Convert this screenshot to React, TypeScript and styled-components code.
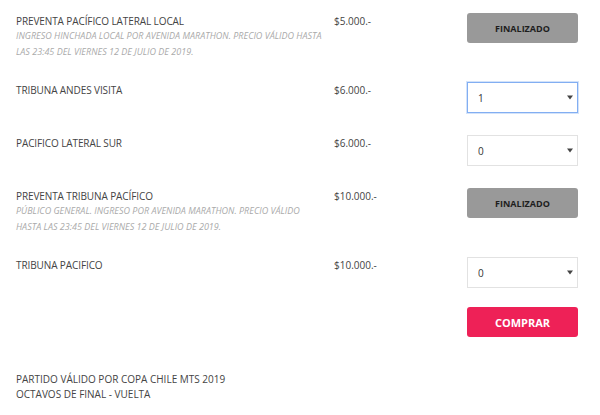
import React from "react";
import styled, { createGlobalStyle } from "styled-components";

type Ticket = {
  name: string;
  description?: string;
  price: string;
  finished?: boolean;
  quantity?: number;
  focused?: boolean;
};

const tickets: Ticket[] = [
  {
    name: "PREVENTA PACÍFICO LATERAL LOCAL",
    description:
      "INGRESO HINCHADA LOCAL POR AVENIDA MARATHON. PRECIO VÁLIDO HASTA LAS 23:45 DEL VIERNES 12 DE JULIO DE 2019.",
    price: "$5.000.-",
    finished: true,
  },
  { name: "TRIBUNA ANDES VISITA", price: "$6.000.-", quantity: 1, focused: true },
  { name: "PACIFICO LATERAL SUR", price: "$6.000.-", quantity: 0 },
  {
    name: "PREVENTA TRIBUNA PACÍFICO",
    description:
      "PÚBLICO GENERAL. INGRESO POR AVENIDA MARATHON. PRECIO VÁLIDO HASTA LAS 23:45 DEL VIERNES 12 DE JULIO DE 2019.",
    price: "$10.000.-",
    finished: true,
  },
  { name: "TRIBUNA PACIFICO", price: "$10.000.-", quantity: 0 },
];

const App = () => {
  return (
    <>
      <GlobalStyle />
      <Page>
        {tickets.map((t) => (
          <TicketRow key={t.name}>
            <Info>
              <Name>{t.name}</Name>
              {t.description && <Description>{t.description}</Description>}
            </Info>
            <Price>{t.price}</Price>
            {t.finished ? (
              <FinishedButton type="button">FINALIZADO</FinishedButton>
            ) : (
              <SelectWrap>
                <QuantitySelect focused={!!t.focused} defaultValue={t.quantity}>
                  {[0, 1, 2, 3, 4].map((n) => (
                    <option key={n} value={n}>
                      {n}
                    </option>
                  ))}
                </QuantitySelect>
                <Arrow width="6" height="5" viewBox="0 0 6 5">
                  <path d="M0 0.5 H6 L3 4.5 Z" fill="#444" />
                </Arrow>
              </SelectWrap>
            )}
          </TicketRow>
        ))}
        <Actions>
          <BuyButton type="button">COMPRAR</BuyButton>
        </Actions>
        <Footer>
          PARTIDO VÁLIDO POR COPA CHILE MTS 2019
          <br />
          OCTAVOS DE FINAL - VUELTA
        </Footer>
      </Page>
    </>
  );
};
export default App;

const GlobalStyle = createGlobalStyle`
  body {
    margin: 0;
    background: #fff;
    font-family: "Open Sans", "Liberation Sans", sans-serif;
    color: #444;
  }
`;

const Page = styled.div`
  width: 600px;
  box-sizing: border-box;
  padding: 13px 22px 0 16px;
`;

const TicketRow = styled.div`
  display: grid;
  grid-template-columns: 318px 133px 111px;
  align-items: start;
  padding-bottom: 22px;
`;

const Info = styled.div`
  padding-top: 1px;
`;

const Name = styled.div`
  font-size: 10px;
  line-height: 14px;
  letter-spacing: -0.1px;
  color: #444;
`;

const Description = styled.div`
  font-size: 9px;
  line-height: 16px;
  font-style: italic;
  color: #aaa;
  padding-right: 8px;
`;

const Price = styled.div`
  font-size: 10px;
  line-height: 14px;
  padding-top: 1px;
  color: #444;
`;

const FinishedButton = styled.button`
  width: 111px;
  height: 30px;
  border: none;
  border-radius: 3px;
  background: #999;
  color: #1e1e1e;
  font-family: inherit;
  font-size: 9px;
  font-weight: 700;
  padding: 0;
`;

const SelectWrap = styled.div`
  position: relative;
  width: 111px;
  height: 31px;
`;

const QuantitySelect = styled.select<{ focused: boolean }>`
  appearance: none;
  width: 100%;
  height: 100%;
  box-sizing: border-box;
  padding: 0 0 0 10px;
  margin: 0;
  background: #fff;
  border: 1px solid ${(p) => (p.focused ? "#82aef2" : "#e2e2e2")};
  box-shadow: ${(p) => (p.focused ? "0 0 0 1px rgba(130,174,242,0.35)" : "none")};
  border-radius: 0;
  font-family: inherit;
  font-size: 10px;
  color: #333;
  outline: none;
`;

const Arrow = styled.svg`
  position: absolute;
  right: 5px;
  top: 13px;
  pointer-events: none;
`;

const Actions = styled.div`
  display: flex;
  justify-content: flex-end;
  margin-top: -3px;
`;

const BuyButton = styled.button`
  width: 111px;
  height: 30px;
  border: none;
  border-radius: 3px;
  background: #ee2157;
  color: #fff;
  font-family: inherit;
  font-size: 11px;
  font-weight: 700;
  padding: 0;
`;

const Footer = styled.div`
  margin-top: 35px;
  font-size: 10px;
  line-height: 15px;
  color: #444;
`;
